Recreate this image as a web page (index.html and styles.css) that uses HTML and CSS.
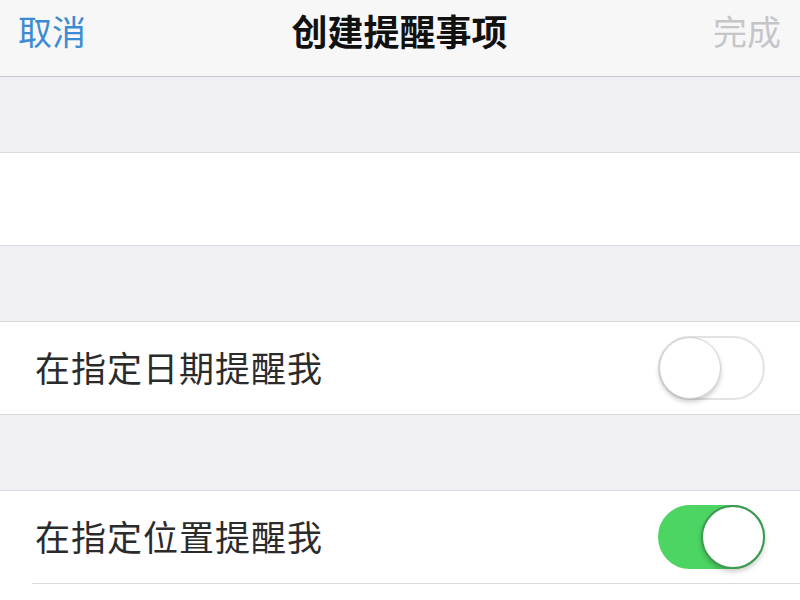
FILE: index.html
```html
<!DOCTYPE html>
<html lang="zh-CN">
<head>
    <meta charset="UTF-8">
    <title>创建提醒事项</title>
    <link rel="stylesheet" href="styles.css">
</head>
<body>
    <div class="nav-bar">
        <span class="nav-cancel">取消</span>
        <span class="nav-title">创建提醒事项</span>
        <span class="nav-done">完成</span>
    </div>

    <div class="gap"></div>
    <div class="cell blank"></div>

    <div class="gap"></div>
    <div class="cell">
        <span class="cell-label">在指定日期提醒我</span>
        <div class="switch"><div class="knob"></div></div>
    </div>

    <div class="gap"></div>
    <div class="cell last">
        <span class="cell-label">在指定位置提醒我</span>
        <div class="switch on"><div class="knob"></div></div>
    </div>
    <div class="cell-separator"></div>
</body>
</html>
```

FILE: styles.css
```css
body, html {
    margin: 0;
    font-family: "Noto Sans CJK SC", "Noto Sans", sans-serif;
    background-color: #ffffff;
}
.nav-bar {
    height: 77px;
    background-color: #f7f7f8;
    border-bottom: 1px solid #c8c7cc;
    display: flex;
    align-items: center;
    justify-content: space-between;
    padding: 0 19px 16px 18px;
    box-sizing: border-box;
}
.nav-cancel {
    font-size: 34px;
    color: #3c8bd3;
}
.nav-title {
    font-size: 36px;
    font-weight: bold;
    color: #111111;
}
.nav-done {
    font-size: 34px;
    color: #c6c6c8;
}
.gap {
    height: 75px;
    background-color: #efeff4;
    border-bottom: 1px solid #d9d9de;
}
.cell {
    height: 92px;
    background-color: #ffffff;
    border-bottom: 1px solid #d9d9de;
    display: flex;
    align-items: center;
    justify-content: space-between;
    padding: 0 35px;
}
.cell.last {
    border-bottom: none;
}
.cell-label {
    font-size: 35px;
    color: #2b2b2b;
    letter-spacing: 1px;
    margin-top: -4px;
}
.cell-separator {
    height: 1px;
    margin-left: 32px;
    background-color: #d9d9de;
}
.switch {
    width: 107px;
    height: 64px;
    border-radius: 32px;
    border: 2px solid #e3e3e6;
    box-sizing: border-box;
    background-color: #ffffff;
    position: relative;
}
.knob {
    position: absolute;
    top: -1px;
    left: -1px;
    width: 62px;
    height: 62px;
    border-radius: 50%;
    background-color: #ffffff;
    box-sizing: border-box;
    border: 1px solid #d0d0d0;
    box-shadow: 0 3px 5px rgba(0, 0, 0, 0.2);
}
.switch.on {
    background-color: #4cd563;
    border-color: #4cd563;
}
.switch.on .knob {
    left: auto;
    right: -2px;
    top: -2px;
    width: 64px;
    height: 64px;
    border: 2px solid #3e9a52;
}
```
